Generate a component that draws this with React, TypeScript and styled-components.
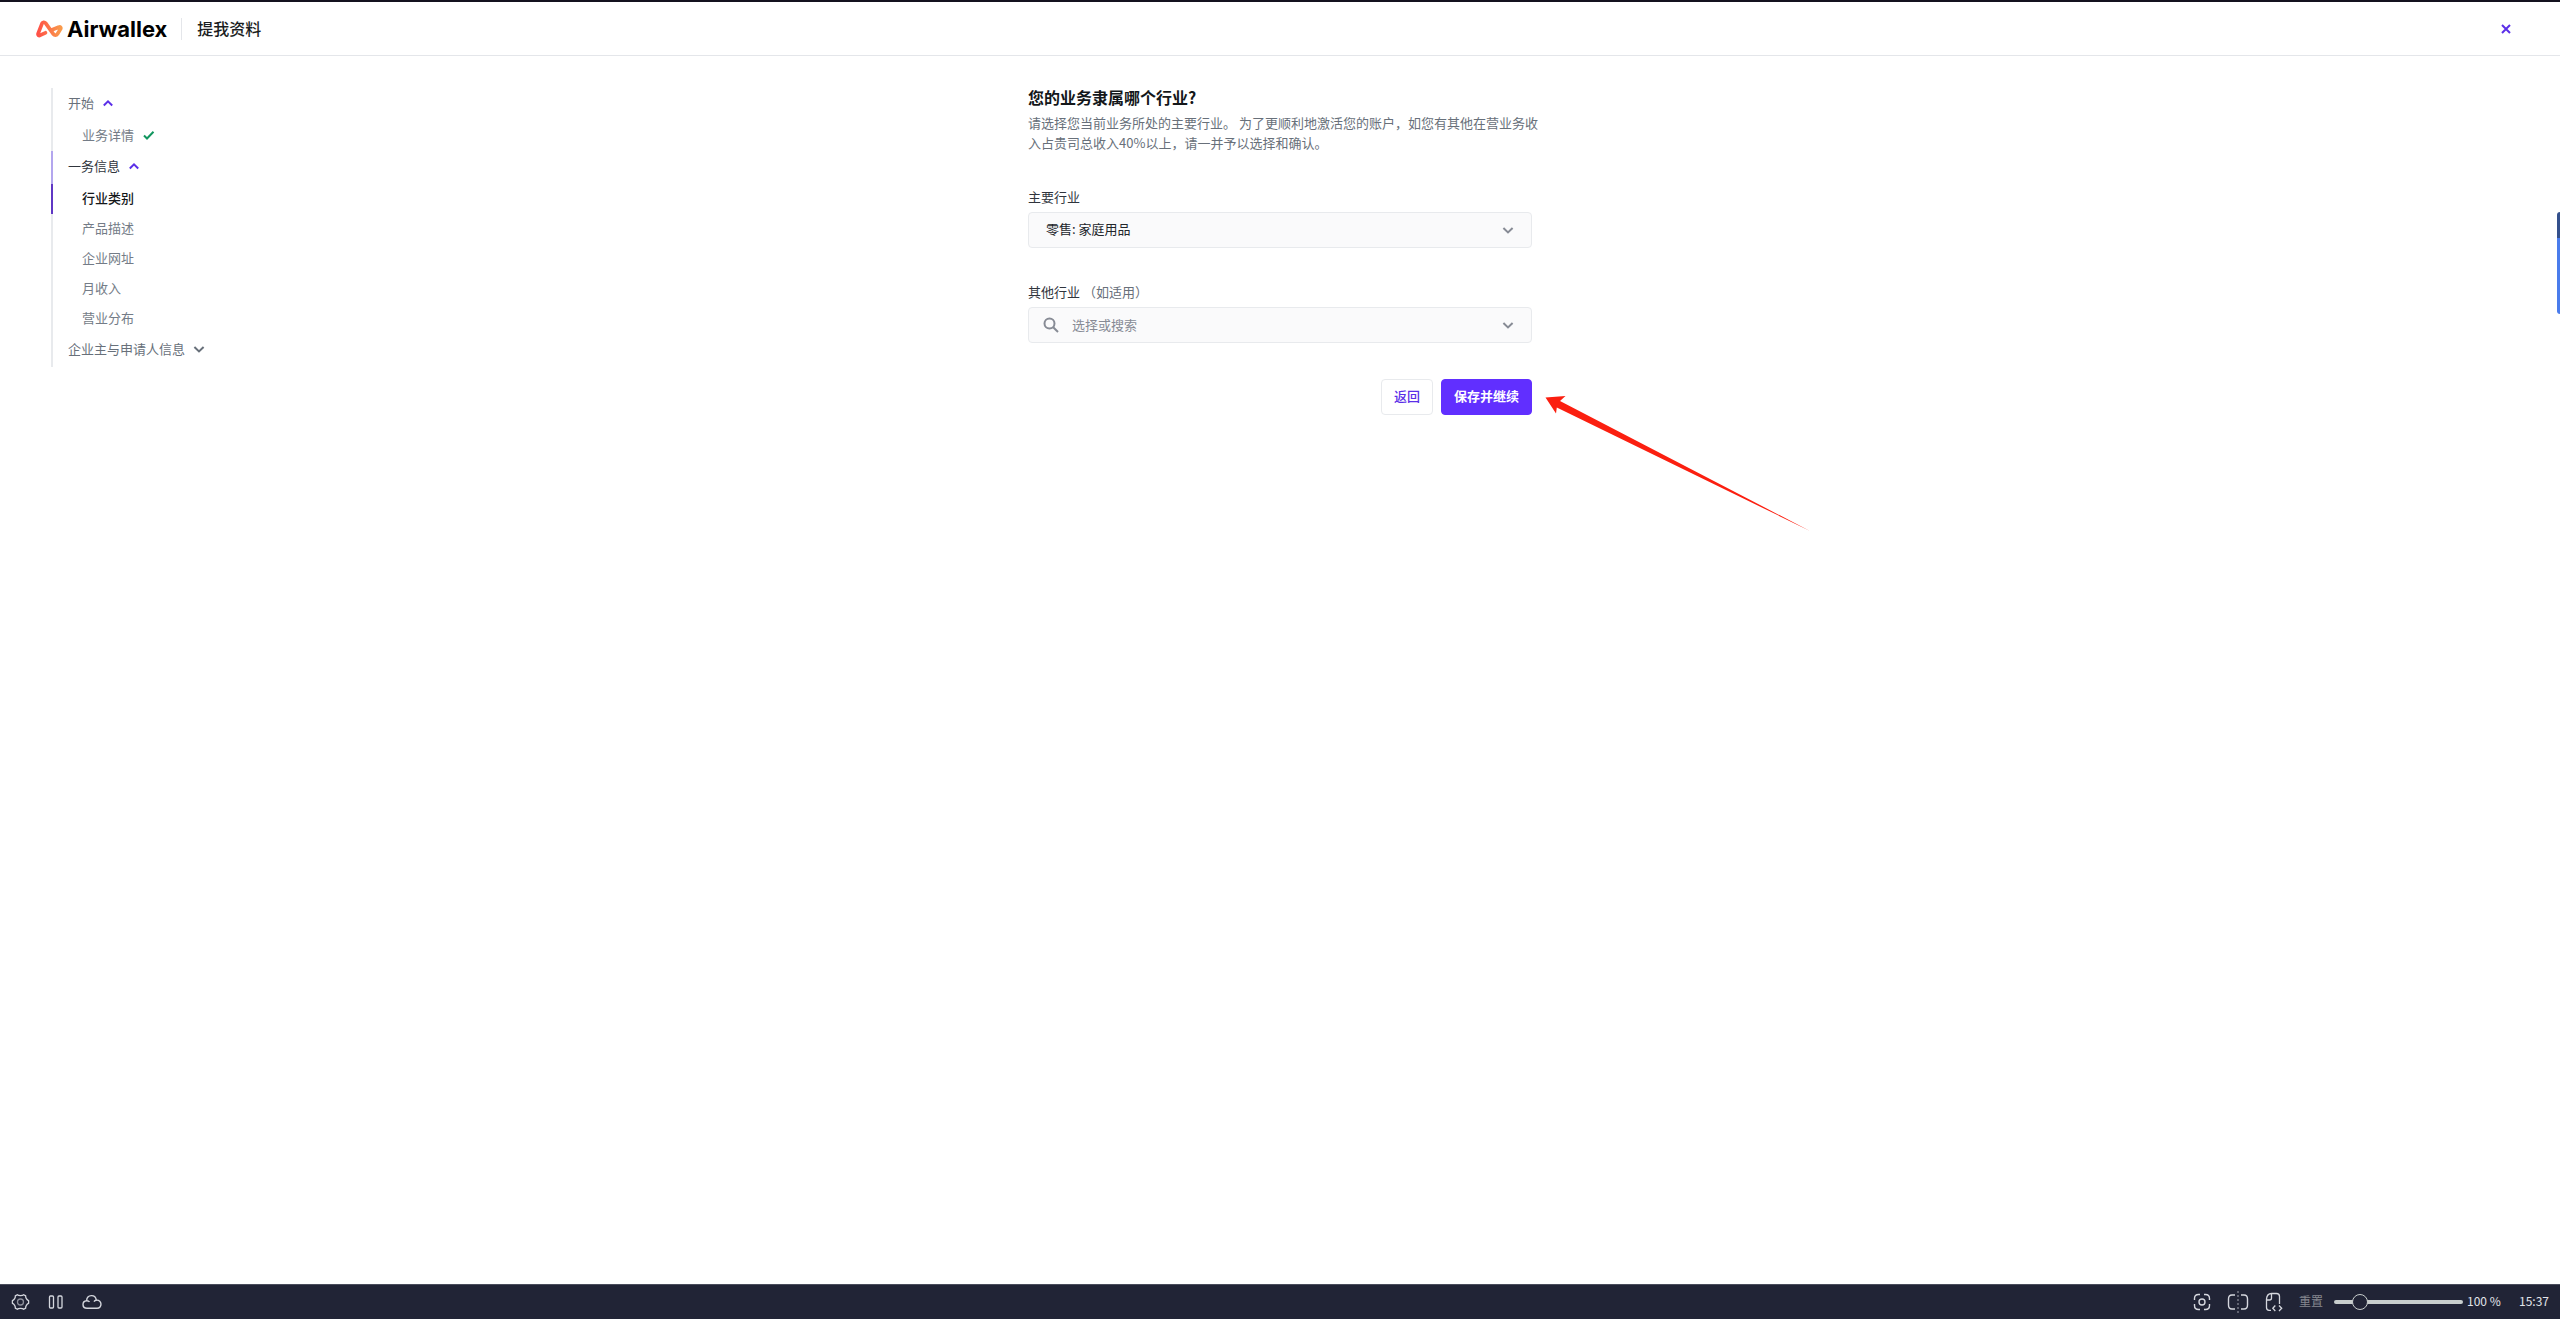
import React, { useState } from "react";
import styled, { createGlobalStyle } from "styled-components";

const GlobalStyle = createGlobalStyle`
  *, *::before, *::after { box-sizing: border-box; }
  body {
    margin: 0;
    background: #ffffff;
    color: #1a1d21;
    font-family: "Noto Sans CJK SC", "Noto Sans", sans-serif;
    font-size: 13px;
    line-height: 20px;
  }
  button, input, select { font: inherit; }
`;

const Page = styled.div`
  position: relative;
  display: flex;
  flex-direction: column;
  min-height: 100vh;
  overflow-x: hidden;
`;

const Header = styled.header`
  display: flex;
  align-items: center;
  height: 56px;
  padding: 0 48px 0 36px;
  border-top: 2px solid #14121f;
  border-bottom: 1px solid #e4e6ea;
`;

const Brand = styled.a`
  display: flex;
  align-items: center;
  gap: 4px;
  color: #000000;
  text-decoration: none;
  font-family: Inter, "Noto Sans", sans-serif;
  font-size: 22px;
  font-weight: 700;
  line-height: 24px;
`;

const Title = styled.h1`
  margin: 0 auto 0 14px;
  padding: 0 0 2px 15px;
  border-left: 1px solid #e4e6ea;
  font-size: 16px;
  font-weight: 500;
  line-height: 20px;
`;

const CloseButton = styled.button`
  display: flex;
  padding: 0;
  border: 0;
  background: none;
  color: #5b2fe8;
  cursor: pointer;
`;

const Body = styled.div`
  display: grid;
  grid-template-columns: 1fr 504px 1fr;
  flex: 1;
  align-items: start;
  padding-top: 32px;
`;

const Steps = styled.nav`
  margin-left: 51px;
`;

const StepList = styled.ul`
  margin: 0;
  padding: 0;
  list-style: none;
`;

const rail = { idle: "#e8eaed", section: "#b3a6ee", current: "#5f37c4" };
type RailTone = keyof typeof rail;

const StepItem = styled.li<{ $tone?: RailTone }>`
  display: flex;
  align-items: center;
  height: 30px;
  padding: 0 0 3px 29px;
  border-left: 2px solid ${(p) => rail[p.$tone ?? "idle"]};
`;

const SectionItem = styled(StepItem)`
  height: 33px;
  padding-left: 15px;
`;

const SectionToggle = styled.button<{ $active?: boolean }>`
  display: flex;
  align-items: center;
  gap: 8px;
  padding: 0;
  border: 0;
  background: none;
  color: ${(p) => (p.$active ? "#30353d" : "#68707a")};
  cursor: pointer;
`;

const StepLink = styled.a<{ $active?: boolean }>`
  display: flex;
  align-items: center;
  gap: 8px;
  color: ${(p) => (p.$active ? "#14171a" : "#747c87")};
  font-weight: ${(p) => (p.$active ? 500 : 400)};
  text-decoration: none;
`;

const Form = styled.form`
  position: relative;
  display: flex;
  flex-direction: column;
`;

const Heading = styled.h2`
  margin: 0 0 6px;
  padding-bottom: 1px;
  color: #14171a;
  font-size: 16px;
  font-weight: 700;
  line-height: 18px;
`;

const Intro = styled.p`
  margin: 0 -8px 34px 0;
  color: #68707a;
`;

const Field = styled.div`
  display: flex;
  flex-direction: column;
  gap: 5px;
  margin-bottom: 34px;
`;

const Label = styled.label`
  color: #30353d;
`;

const Optional = styled.span`
  color: #68707a;
`;

const Control = styled.div`
  display: flex;
  align-items: center;
  position: relative;
  height: 36px;
  border: 1px solid #e8eaed;
  border-radius: 4px;
  background: #fafafb;
  color: #878b95;
`;

const Select = styled.select`
  flex: 1;
  height: 100%;
  padding: 0 40px 2px 17px;
  border: 0;
  background: none;
  color: #22262b;
  appearance: none;
`;

const SearchInput = styled.input`
  flex: 1;
  height: 100%;
  padding: 0 40px 2px 43px;
  border: 0;
  background: none;
  color: #22262b;
  &::placeholder {
    color: #878b95;
    opacity: 1;
  }
`;

const Adornment = styled.span<{ $side: "left" | "right" }>`
  position: absolute;
  ${(p) => (p.$side === "left" ? "left: 14px" : "right: 17px")};
  display: flex;
  pointer-events: none;
`;

const Actions = styled.div`
  display: flex;
  justify-content: flex-end;
  gap: 8px;
  margin-top: 2px;
`;

const Button = styled.button<{ $primary?: boolean }>`
  height: 36px;
  padding: 0 12px 2px;
  border: 1px solid ${(p) => (p.$primary ? "#612fff" : "#e8eaed")};
  border-radius: 4px;
  background: ${(p) => (p.$primary ? "#612fff" : "#ffffff")};
  color: ${(p) => (p.$primary ? "#ffffff" : "#5b2fe8")};
  font-weight: ${(p) => (p.$primary ? 700 : 500)};
  cursor: pointer;
`;

const ArrowMark = styled.svg`
  position: absolute;
  top: 307px;
  left: calc(100% + 13px);
  pointer-events: none;
`;

const SideTab = styled.div`
  position: absolute;
  top: 212px;
  right: 0;
  width: 3px;
  height: 102px;
  border-radius: 3px 0 0 3px;
  background: linear-gradient(#34508c 26px, #4a7cec 26px);
`;

const StatusBar = styled.footer`
  display: flex;
  align-items: center;
  justify-content: space-between;
  height: 35px;
  padding: 0 11px;
  border-top: 1px solid #4a4d5c;
  background: #212436;
  color: #e2e4ea;
  font-size: 12px;
`;

const BarGroup = styled.div`
  display: flex;
  align-items: center;
  gap: 16px;
`;

const ZoomGroup = styled.div`
  display: flex;
  align-items: center;
`;

const BarButton = styled.button<{ $muted?: boolean }>`
  display: flex;
  padding: ${(p) => (p.$muted ? "0 0 2px" : "0")};
  border: 0;
  background: none;
  color: ${(p) => (p.$muted ? "#85878f" : "#d5d7de")};
  cursor: pointer;
`;

const ZoomSlider = styled.input`
  width: 129px;
  height: 16px;
  margin: 0 4px 0 11px;
  background: none;
  appearance: none;
  &::-webkit-slider-runnable-track {
    height: 4px;
    border-radius: 2px;
    background: #c8cecd;
  }
  &::-webkit-slider-thumb {
    appearance: none;
    width: 16px;
    height: 16px;
    margin-top: -6px;
    border: 1px solid #c8cecd;
    border-radius: 50%;
    background: #212436;
  }
`;

const ZoomValue = styled.output`
  width: 52px;
  padding-bottom: 2px;
  white-space: nowrap;
`;

const Clock = styled.time`
  padding-bottom: 2px;
`;

const Chevron = ({ up = false, color = "currentColor" }) => (
  <svg width="12" height="12" viewBox="0 0 12 12" fill="none" stroke={color} strokeWidth="2">
    <path d={up ? "M1.8 8.5 6 4.4 10.2 8.5" : "M1.4 4 6 8.4 10.6 4"} />
  </svg>
);

const Check = () => (
  <svg width="14" height="12" viewBox="0 0 14 12" fill="none" stroke="#12965f" strokeWidth="2">
    <path d="M2 6.5 5 9.5 11.5 2.8" />
  </svg>
);

const Logo = () => (
  <svg width="27" height="18" viewBox="0 0 27 18" fill="none">
    <defs>
      <linearGradient id="brand" x1="0" y1="0" x2="1" y2="0">
        <stop offset="0" stopColor="#ff5147" />
        <stop offset="1" stopColor="#f99a4b" />
      </linearGradient>
    </defs>
    <path
      d="M9.4 12.8 4.4 15.2C2.8 16 1.6 15 2.2 13.4L6 3.6C6.7 2 8.5 1.8 9.6 3.2L17.4 14.1C18.5 15.6 20.8 15.5 21.6 13.8L24.6 8.9C25.2 7.5 24.2 6.6 23 7.1L16.8 9.4"
      stroke="url(#brand)"
      strokeWidth="3.7"
      strokeLinecap="round"
      strokeLinejoin="round"
    />
  </svg>
);

const sectionItems = ["产品描述", "企业网址", "月收入", "营业分布"];

export default function App() {
  const [zoom, setZoom] = useState(16);
  return (
    <>
      <GlobalStyle />
      <Page>
        <Header>
          <Brand href="#">
            <Logo />
            Airwallex
          </Brand>
          <Title>提我资料</Title>
          <CloseButton type="button" aria-label="关闭">
            <svg width="12" height="12" viewBox="0 0 12 12" stroke="currentColor" strokeWidth="2">
              <path d="M2 2 10 10M10 2 2 10" />
            </svg>
          </CloseButton>
        </Header>

        <Body>
          <Steps>
            <StepList>
              <SectionItem>
                <SectionToggle type="button">
                  开始
                  <Chevron up color="#5b2fe8" />
                </SectionToggle>
              </SectionItem>
              <StepItem>
                <StepLink href="#">
                  业务详情
                  <Check />
                </StepLink>
              </StepItem>
              <SectionItem $tone="section">
                <SectionToggle type="button" $active>
                  一务信息
                  <Chevron up color="#5b2fe8" />
                </SectionToggle>
              </SectionItem>
              <StepItem $tone="current">
                <StepLink href="#" $active>
                  行业类别
                </StepLink>
              </StepItem>
              {sectionItems.map((name) => (
                <StepItem key={name}>
                  <StepLink href="#">{name}</StepLink>
                </StepItem>
              ))}
              <SectionItem>
                <SectionToggle type="button">
                  企业主与申请人信息
                  <Chevron />
                </SectionToggle>
              </SectionItem>
            </StepList>
          </Steps>

          <Form onSubmit={(e) => e.preventDefault()}>
            <Heading>您的业务隶属哪个行业?</Heading>
            <Intro>
              请选择您当前业务所处的主要行业。 为了更顺利地激活您的账户，如您有其他在营业务收
              <br />
              入占贵司总收入40%以上，请一并予以选择和确认。
            </Intro>
            <Field>
              <Label htmlFor="primary">主要行业</Label>
              <Control>
                <Select id="primary">
                  <option>零售: 家庭用品</option>
                </Select>
                <Adornment $side="right">
                  <Chevron />
                </Adornment>
              </Control>
            </Field>
            <Field>
              <Label htmlFor="other">
                其他行业 <Optional>（如适用）</Optional>
              </Label>
              <Control>
                <Adornment $side="left">
                  <svg width="16" height="16" viewBox="0 0 16 16" fill="none" stroke="currentColor" strokeWidth="2">
                    <circle cx="6.5" cy="6.5" r="5" />
                    <path d="M10.2 10.2 15 15" />
                  </svg>
                </Adornment>
                <SearchInput id="other" type="text" placeholder="选择或搜索" />
                <Adornment $side="right">
                  <Chevron />
                </Adornment>
              </Control>
            </Field>
            <Actions>
              <Button type="button">返回</Button>
              <Button type="submit" $primary>
                保存并继续
              </Button>
            </Actions>
            <ArrowMark width="268" height="138" viewBox="0 0 268 138" aria-hidden="true">
              <path d="M0.5 2.5 20.5 1 15 6 265 136 11.8 12.4 11 18.5Z" fill="#fb1f10" />
            </ArrowMark>
          </Form>
        </Body>

        <StatusBar>
          <BarGroup>
            <BarButton type="button" aria-label="设置">
              <svg width="19" height="18" viewBox="0 0 19 18" fill="none" stroke="currentColor" strokeWidth="1.3">
                <path
                  d="M6.3 1.7C7.5 2.9 11.5 2.9 12.7 1.7L14.7 2.9C14.3 4.6 15.9 7.1 17.6 7.7V10.3C15.9 10.9 14.3 13.4 14.7 15.1L12.7 16.3C11.5 15.1 7.5 15.1 6.3 16.3L4.3 15.1C4.7 13.4 3.1 10.9 1.4 10.3V7.7C3.1 7.1 4.7 4.6 4.3 2.9Z"
                  strokeLinejoin="round"
                />
                <circle cx="9.5" cy="9" r="3" opacity="0.6" />
              </svg>
            </BarButton>
            <BarButton type="button" aria-label="暂停">
              <svg width="20" height="18" viewBox="0 0 20 18" fill="none" stroke="currentColor" strokeWidth="1.3">
                <rect x="3.5" y="3" width="4" height="12" rx="1" />
                <rect x="12" y="3" width="4" height="12" rx="1" />
              </svg>
            </BarButton>
            <BarButton type="button" aria-label="云端">
              <svg width="20" height="18" viewBox="0 0 20 18" fill="none" stroke="currentColor" strokeWidth="1.4">
                <path d="M5 15.3C-0.3 15.3-0.2 8 4.6 7.7C5 1 13.6 1 14.3 7.2C20.4 6.6 20.4 15.3 15 15.3ZM4.6 7.7C6 7.6 7 8.2 7.5 9M14.3 7.2C13 7.2 12.4 7.8 12 8.6" />
              </svg>
            </BarButton>
          </BarGroup>
          <ZoomGroup>
            <BarGroup>
              <BarButton type="button" aria-label="聚焦">
                <svg width="18" height="18" viewBox="0 0 18 18" fill="none" stroke="currentColor" strokeWidth="1.4">
                  <path d="M1.5 7V5.5Q1.5 1.5 5.5 1.5H7M11 1.5H12.5Q16.5 1.5 16.5 5.5V7M16.5 11V12.5Q16.5 16.5 12.5 16.5H11M7 16.5H5.5Q1.5 16.5 1.5 12.5V11" />
                  <circle cx="9" cy="9" r="3" />
                </svg>
              </BarButton>
              <BarButton type="button" aria-label="对比">
                <svg width="22" height="22" viewBox="0 0 22 22" fill="none" stroke="currentColor" strokeWidth="1.4">
                  <path d="M8 4H5Q1.5 4 1.5 8V14Q1.5 18 5 18H8M14 4H17Q20.5 4 20.5 8V14Q20.5 18 17 18H14" />
                  <path d="M11 0V22" strokeDasharray="2 2" opacity="0.5" />
                </svg>
              </BarButton>
              <BarButton type="button" aria-label="页面代码">
                <svg width="18" height="20" viewBox="0 0 18 20" fill="none" stroke="currentColor" strokeWidth="1.3">
                  <path d="M6 18.3H4Q1.5 18.3 1.5 15.5V7Q2 1.5 6.5 1.5H11.5Q14.5 1.5 14.5 4.5V12M1.5 8H4.5Q6.5 8 6.5 6V1.5M10.3 13.5 7.8 16.3 10.3 19M14 13.5 16.7 16.3 14 19" />
                </svg>
              </BarButton>
              <BarButton type="button" $muted>
                重置
              </BarButton>
            </BarGroup>
            <ZoomSlider
              type="range"
              aria-label="缩放"
              min={0}
              max={100}
              value={zoom}
              onChange={(e) => setZoom(Number(e.target.value))}
            />
            <ZoomValue>100 %</ZoomValue>
            <Clock>15:37</Clock>
          </ZoomGroup>
        </StatusBar>
        <SideTab />
      </Page>
    </>
  );
}
